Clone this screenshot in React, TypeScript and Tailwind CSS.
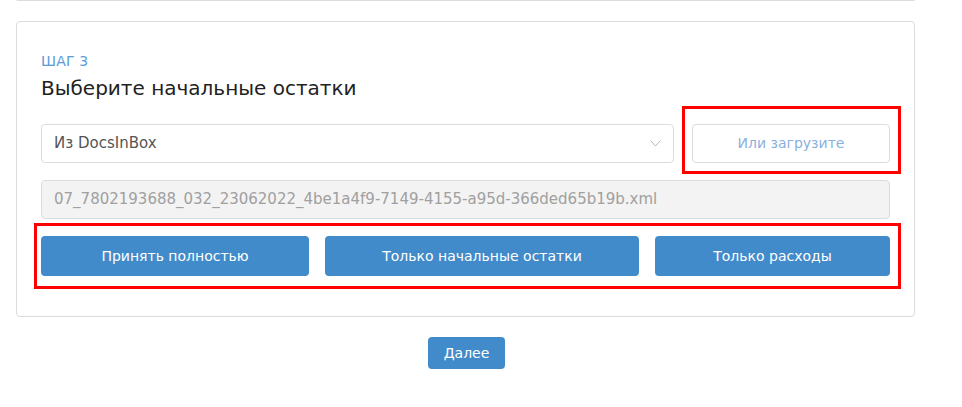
import React from "react";

export default function App() {
  const font = { fontFamily: '"DejaVu Sans", "Noto Sans", sans-serif' };
  return (
    <div className="w-[962px] h-[407px] bg-white relative overflow-hidden" style={font}>
      {/* previous card bottom edge */}
      <div className="ml-[16px] w-[899px] h-[2px] border-b border-x border-[#dcdcdc] rounded-b-[4px] -mt-[1px]" />

      <div className="ml-[16px] mt-[20px] w-[899px] h-[296px] border border-[#dcdcdc] rounded-[4px] px-[24px] pt-[29px]">
        <div className="text-[14px] leading-[20px] text-[#5b9bd8] tracking-[0.2px]">ШАГ 3</div>
        <div className="mt-[3px] text-[20px] leading-[28px] text-[#222]">Выберите начальные остатки</div>

        <div className="relative mt-[22px] flex gap-[18px]">
          <div className="flex-1 h-[39px] border border-[#dcdcdc] rounded-[4px] flex items-center justify-between pl-[12px] pr-[12px]">
            <span className="text-[15px] text-[#555]">Из DocsInBox</span>
            <svg width="11" height="7" viewBox="0 0 11 7" fill="none">
              <path d="M0.5 0.5 L5.5 6 L10.5 0.5" stroke="#b5b5b5" strokeWidth="1" />
            </svg>
          </div>
          <button className="w-[198px] h-[39px] border border-[#dcdcdc] rounded-[4px] text-[14px] text-[#8ab0de] bg-white">
            Или загрузите
          </button>
          <div className="absolute left-[641px] top-[-18px] w-[219px] h-[68px] border-[3px] border-[#ff0000] pointer-events-none" />
        </div>

        <div className="mt-[17px] h-[39px] bg-[#f3f3f3] border border-[#dcdcdc] rounded-[4px] flex items-center pl-[12px]">
          <span className="text-[15px] text-[#a0a0a0]">07_7802193688_032_23062022_4be1a4f9-7149-4155-a95d-366ded65b19b.xml</span>
        </div>

        <div className="relative mt-[17px] flex gap-[16px]">
          <button className="w-[268px] h-[40px] rounded-[4px] bg-[#428bca] text-white text-[14px]">Принять полностью</button>
          <button className="w-[314px] h-[40px] rounded-[4px] bg-[#428bca] text-white text-[14px]">Только начальные остатки</button>
          <button className="flex-1 h-[40px] rounded-[4px] bg-[#428bca] text-white text-[14px]">Только расходы</button>
          <div className="absolute left-[-7px] top-[-13px] w-[867px] h-[66px] border-[3px] border-[#ff0000] pointer-events-none" />
        </div>
      </div>

      <div className="ml-[16px] w-[899px] flex justify-center mt-[20px]">
        <button className="ml-[2px] w-[77px] h-[32px] rounded-[4px] bg-[#428bca] text-white text-[14px]">Далее</button>
      </div>
    </div>
  );
}
